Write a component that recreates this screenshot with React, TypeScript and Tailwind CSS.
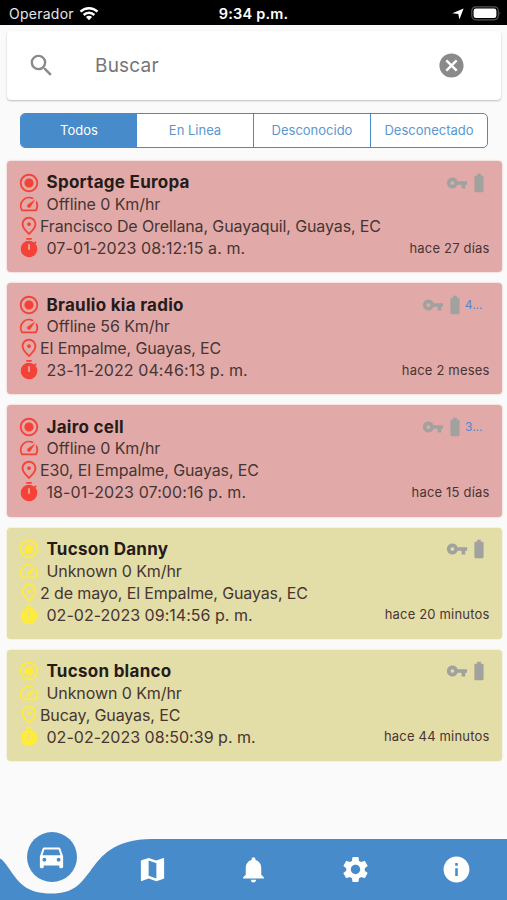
import {
  MdBatteryFull,
  MdCancel,
  MdDirectionsCar,
  MdInfo,
  MdMap,
  MdNotifications,
  MdOutlinePlace,
  MdRadioButtonChecked,
  MdSearch,
  MdSettings,
  MdSpeed,
  MdTimer,
  MdVpnKey,
} from "react-icons/md";

type Device = {
  name: string;
  status: "offline" | "unknown";
  speed: string;
  address: string;
  date: string;
  ago: string;
  battery?: string;
};

const filtros = ["Todos", "En Linea", "Desconocido", "Desconectado"];

const devices: Device[] = [
  {
    name: "Sportage Europa",
    status: "offline",
    speed: "Offline 0 Km/hr",
    address: "Francisco De Orellana, Guayaquil, Guayas, EC",
    date: "07-01-2023 08:12:15 a. m.",
    ago: "hace 27 días",
  },
  {
    name: "Braulio kia radio",
    status: "offline",
    speed: "Offline 56 Km/hr",
    address: "El Empalme, Guayas, EC",
    date: "23-11-2022 04:46:13 p. m.",
    ago: "hace 2 meses",
    battery: "4...",
  },
  {
    name: "Jairo cell",
    status: "offline",
    speed: "Offline 0 Km/hr",
    address: "E30, El Empalme, Guayas, EC",
    date: "18-01-2023 07:00:16 p. m.",
    ago: "hace 15 días",
    battery: "3...",
  },
  {
    name: "Tucson Danny",
    status: "unknown",
    speed: "Unknown 0 Km/hr",
    address: "2 de mayo, El Empalme, Guayas, EC",
    date: "02-02-2023 09:14:56 p. m.",
    ago: "hace 20 minutos",
  },
  {
    name: "Tucson blanco",
    status: "unknown",
    speed: "Unknown 0 Km/hr",
    address: "Bucay, Guayas, EC",
    date: "02-02-2023 08:50:39 p. m.",
    ago: "hace 44 minutos",
  },
];

function StatusBar() {
  return (
    <div className="grid h-[25px] shrink-0 grid-cols-3 items-center bg-black pt-[2px] text-white">
      <div className="flex items-center gap-[5px] pl-[9px] text-[14px] tracking-[0.25px] text-gray-200">
        Operador
        <svg width="20" height="15" viewBox="0 0 20 15" fill="none" stroke="white" strokeWidth="2.5">
          <path d="M1.5 5.6a12.2 12.2 0 0 1 17 0" />
          <path d="M4.7 9a7.5 7.5 0 0 1 10.6 0" />
          <path d="M10 14.3 6.9 11.1a4.4 4.4 0 0 1 6.2 0Z" fill="white" stroke="none" />
        </svg>
      </div>
      <div className="text-center text-[14.5px] font-semibold tracking-[0.2px]">9:34 p.m.</div>
      <div className="flex items-center justify-end gap-[7px] pr-[5px]">
        <svg width="12" height="12" viewBox="0 0 12 12" fill="white">
          <path d="M11.6.4 7.4 11.6 6.3 5.9.3 5.2Z" />
        </svg>
        <svg width="31" height="15" viewBox="0 0 31 15">
          <rect x="0.8" y="0.8" width="26.5" height="13" rx="4" fill="none" stroke="#555" strokeWidth="1.2" />
          <rect x="2.6" y="2.5" width="22.8" height="9.6" rx="2.4" fill="white" />
          <path d="M28.6 5.2q1.8 2.1 0 4.2Z" fill="#666" />
        </svg>
      </div>
    </div>
  );
}

function DeviceCard({ device }: { device: Device }) {
  const offline = device.status === "offline";

  return (
    <div
      className={
        offline
          ? "flex h-[111.2px] justify-between rounded-[4px] bg-[#e1aaa9] pt-[10.6px] pr-[12px] pl-[13px] shadow-[0_0_2px_#e1aaa9]"
          : "flex h-[111.2px] justify-between rounded-[4px] bg-[#e3dda7] pt-[10.6px] pr-[12px] pl-[13px] shadow-[0_0_2px_#e3dda7]"
      }
    >
      <div className={offline ? "text-[#f44336]" : "text-[#ffeb3b]"}>
        <div className="flex h-[22px] items-center gap-[7px]">
          <MdRadioButtonChecked size={22} className="-ml-[2px]" />
          <span className="pt-px text-[17px] font-bold tracking-[0.27px] text-[#251b19]">{device.name}</span>
        </div>
        <div className="-mt-[0.5px] flex h-[22px] items-center gap-[7px]">
          <MdSpeed size={22} className="-ml-[2px]" />
          <span className="text-[16px] tracking-[-0.09px] text-[#463532]">{device.speed}</span>
        </div>
        <div className="flex h-[22px] items-center">
          <MdOutlinePlace size={22} className="-ml-[2px]" />
          <span className="ml-[0.5px] text-[16px] tracking-[-0.12px] text-[#463532]">{device.address}</span>
        </div>
        <div className="flex h-[22px] items-center gap-[7px]">
          <MdTimer size={22} className="-ml-[2px]" />
          <span
            className={
              offline
                ? "text-[16px] tracking-[0.09px] text-[#463532]"
                : "text-[16px] tracking-[0.02px] text-[#463532]"
            }
          >
            {device.date}
          </span>
        </div>
      </div>
      <div className="flex shrink-0 flex-col items-end">
        <div className="flex h-[22px] items-center text-[#a1a19e]">
          <MdVpnKey size={22} />
          <MdBatteryFull size={22} />
          {device.battery && (
            <span className="-ml-px mr-[7px] text-[12px] text-[#5685cf]">{device.battery}</span>
          )}
        </div>
        <span className="mt-[43px] h-[22px] text-[13px] leading-[22px] tracking-[0.18px] text-[#4a3432]">
          {device.ago}
        </span>
      </div>
    </div>
  );
}

function BottomNav() {
  return (
    <nav className="relative h-[72px] shrink-0">
      <svg className="absolute bottom-0 left-0" width="507" height="62" viewBox="0 0 507 62">
        <path
          d="M0 20.500Q3 21.500 10 32C19 45 27 55.500 51.500 55.500C74 55.500 80 46 90 33.500C101 18 114 1 152 1H507V62H0Z"
          fill="#478bca"
        />
      </svg>
      <div className="relative grid h-full grid-cols-5 pl-px text-white">
        <div className="flex justify-center">
          <div className="mt-[3.500px] flex size-[50px] items-center justify-center rounded-full bg-[#478bca]">
            <MdDirectionsCar size={31} />
          </div>
        </div>
        <div className="flex justify-center pt-[26px]"><MdMap size={31} /></div>
        <div className="flex justify-center pt-[26px]"><MdNotifications size={31} /></div>
        <div className="flex justify-center pt-[26px]"><MdSettings size={31} /></div>
        <div className="flex justify-center pt-[26px]"><MdInfo size={31} /></div>
      </div>
    </nav>
  );
}

export default function App() {
  return (
    <div className="flex h-[900px] w-[507px] flex-col overflow-hidden bg-[#fafafa] font-['Inter',sans-serif]">
      <StatusBar />

      <div className="mr-[6px] ml-[7px] mt-[6px] flex h-[69px] shrink-0 items-center rounded-[4px] bg-white pr-[35px] pl-[20px] text-[#8a8a8a] shadow-[0_1px_2px_rgba(0,0,0,0.25)]">
        <MdSearch size={29} />
        <span className="ml-[39px] flex-1 pt-px text-[19px] tracking-[0.2px] text-[#757575]">Buscar</span>
        <MdCancel size={29} />
      </div>

      <div className="mr-[19px] ml-[20px] mt-[13px] flex h-[35px] shrink-0 overflow-hidden rounded-[5px] border border-[#478bca] bg-white text-[13px] text-[#5b97d0]">
        {filtros.map((filtro, i) => (
          <button
            key={filtro}
            className={
              i === 0
                ? "-mr-px ml-0 flex-1 basis-0 bg-[#478bca] text-white"
                : "flex-1 basis-0 border-l border-[#478bca]"
            }
          >
            {filtro}
          </button>
        ))}
      </div>

      <div className="mr-[5.500px] ml-[6.500px] mt-[13px] flex flex-1 flex-col gap-[11px]">
        {devices.map((device) => (
          <DeviceCard key={device.name} device={device} />
        ))}
      </div>

      <BottomNav />
    </div>
  );
}
